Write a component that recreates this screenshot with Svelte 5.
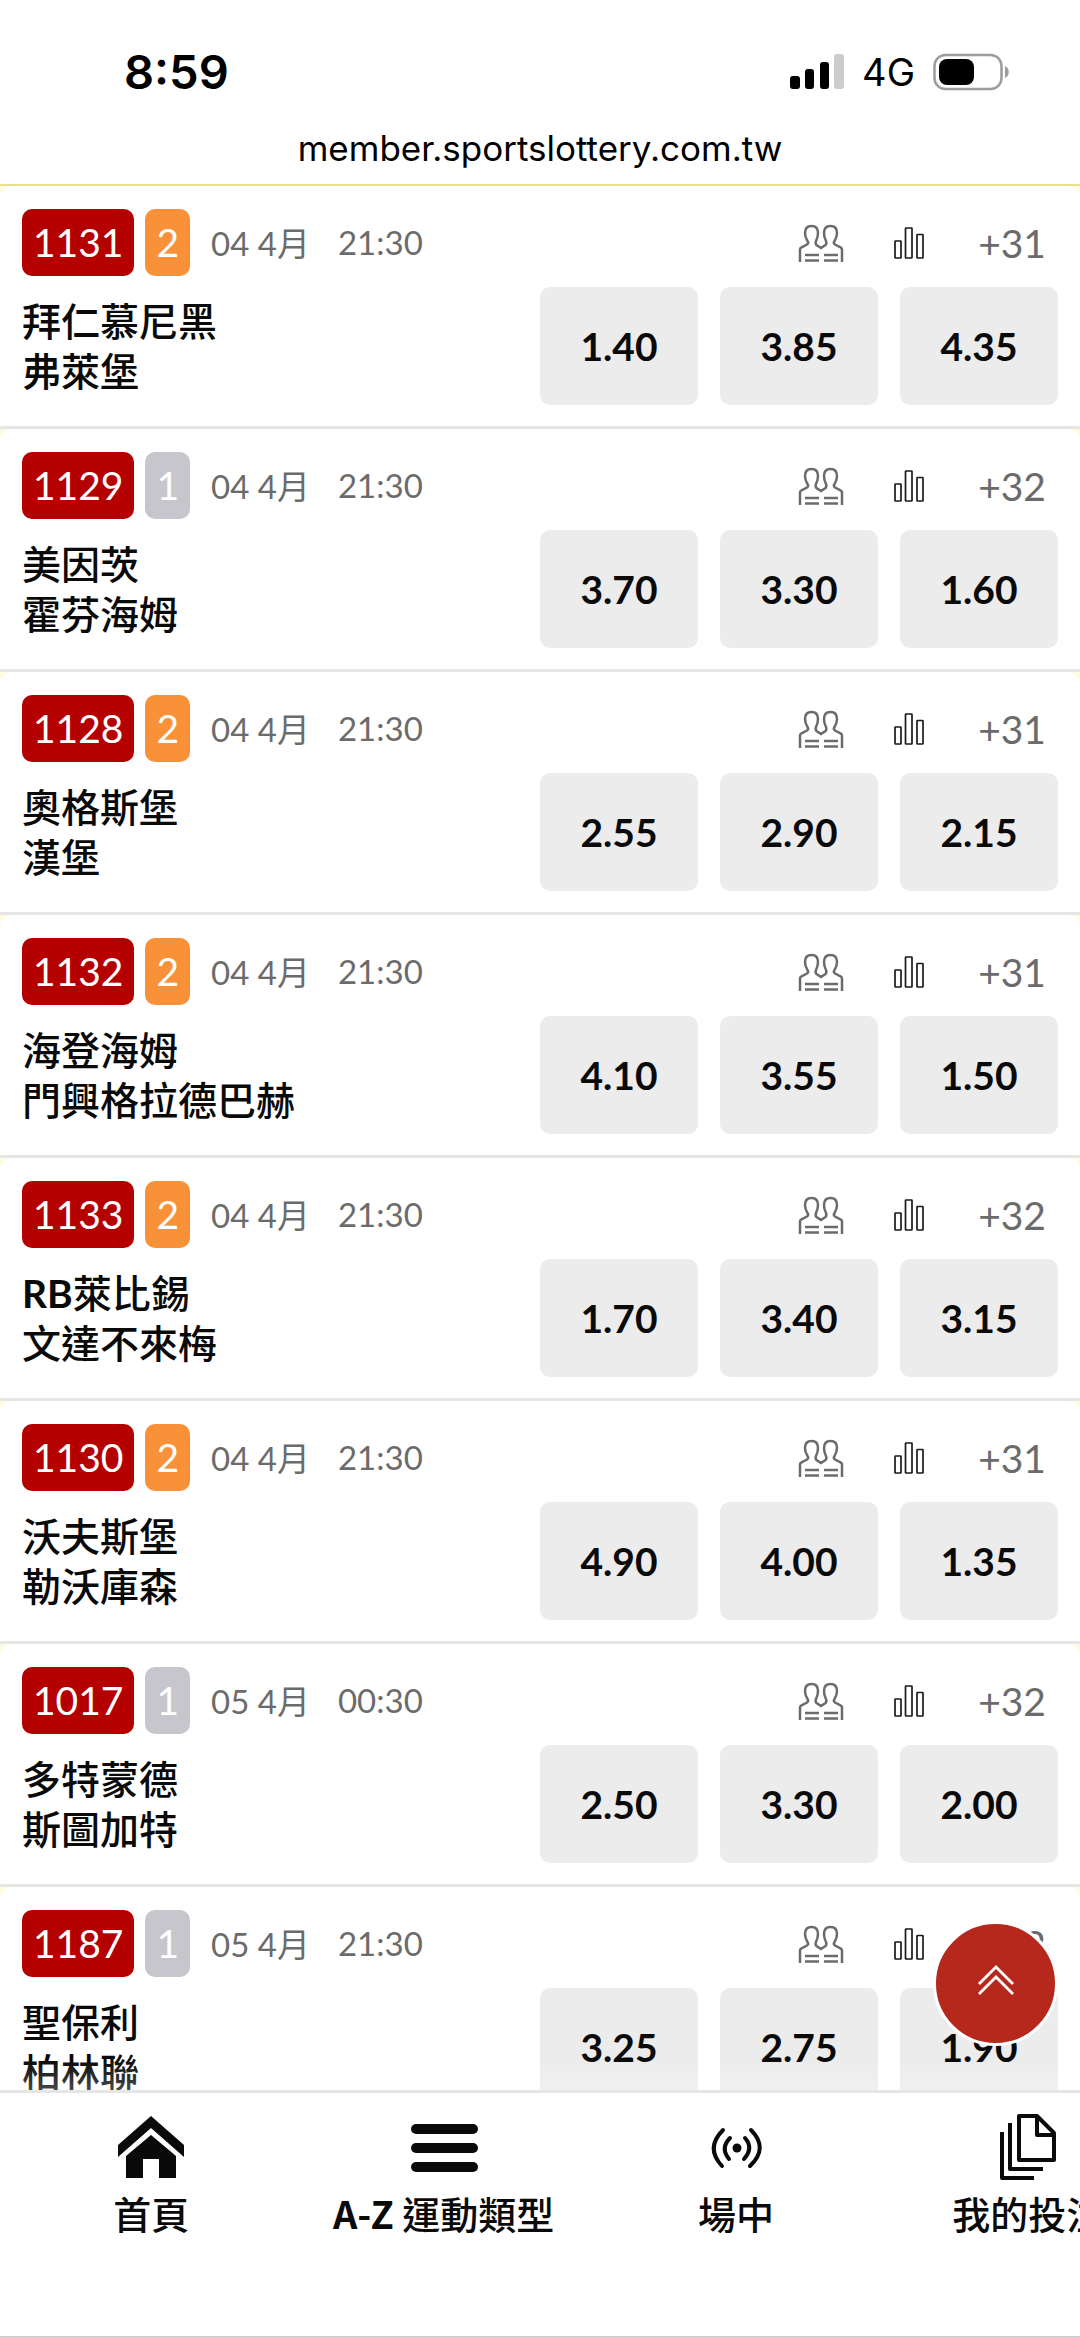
<script lang="ts">
  type Match = {
    id: string
    legs: number
    date: string
    time: string
    more: string
    teams: { prefix?: string; name: string }[]
    odds: string[]
  }

  const matches: Match[] = [
    { id: "1131", legs: 2, date: "04 4月", time: "21:30", more: "+31", teams: [{ name: "拜仁慕尼黑" }, { name: "弗萊堡" }], odds: ["1.40", "3.85", "4.35"] },
    { id: "1129", legs: 1, date: "04 4月", time: "21:30", more: "+32", teams: [{ name: "美因茨" }, { name: "霍芬海姆" }], odds: ["3.70", "3.30", "1.60"] },
    { id: "1128", legs: 2, date: "04 4月", time: "21:30", more: "+31", teams: [{ name: "奧格斯堡" }, { name: "漢堡" }], odds: ["2.55", "2.90", "2.15"] },
    { id: "1132", legs: 2, date: "04 4月", time: "21:30", more: "+31", teams: [{ name: "海登海姆" }, { name: "門興格拉德巴赫" }], odds: ["4.10", "3.55", "1.50"] },
    { id: "1133", legs: 2, date: "04 4月", time: "21:30", more: "+32", teams: [{ prefix: "RB", name: "萊比錫" }, { name: "文達不來梅" }], odds: ["1.70", "3.40", "3.15"] },
    { id: "1130", legs: 2, date: "04 4月", time: "21:30", more: "+31", teams: [{ name: "沃夫斯堡" }, { name: "勒沃庫森" }], odds: ["4.90", "4.00", "1.35"] },
    { id: "1017", legs: 1, date: "05 4月", time: "00:30", more: "+32", teams: [{ name: "多特蒙德" }, { name: "斯圖加特" }], odds: ["2.50", "3.30", "2.00"] },
    { id: "1187", legs: 1, date: "05 4月", time: "21:30", more: "+32", teams: [{ name: "聖保利" }, { name: "柏林聯" }], odds: ["3.25", "2.75", "1.90"] },
  ]
</script>

<div class="app">
  <header>
    <div class="status">
      <span class="clock">8:59</span>
      <div class="signals">
        <svg width="54" height="36" viewBox="0 0 54 36" aria-hidden="true">
          <rect x="0" y="22" width="10" height="13" rx="3" />
          <rect x="15" y="15" width="9" height="20" rx="3" />
          <rect x="30" y="8" width="9" height="27" rx="3" />
          <rect x="44" y="0" width="10" height="35" rx="3" fill="#ccc" />
        </svg>
        <span class="network">4G</span>
        <svg width="76" height="38" viewBox="0 0 76 38" aria-hidden="true">
          <rect x="1.500" y="2" width="67" height="34" rx="11" fill="none" stroke="#9d9d9d" stroke-width="2.500" />
          <rect x="6" y="6" width="35" height="26" rx="8" />
          <path d="M72 13c5 2 5 10 0 12z" fill="#9d9d9d" />
        </svg>
      </div>
    </div>
    <div class="url">member.sportslottery.com.tw</div>
  </header>

  <main>
    {#each matches as match (match.id)}
      <article class="match">
        <div class="info">
          <span class="badge">{match.id}</span>
          <span class="badge" class:single={match.legs === 1} class:double={match.legs === 2}>{match.legs}</span>
          <span class="date">{match.date}</span>
          <span class="time">{match.time}</span>
          <div class="links">
            <button class="people" aria-label="對戰紀錄">
              <svg width="46" height="38" viewBox="0 0 46 38" fill="none" stroke="#6b6b6b" stroke-width="2.500">
                <path d="M2 38V25.500Q2 24 3.500 23.300L9 20.500Q11 19 9.500 17Q7 13 7 9Q7 2 13.500 2Q20 2 20 9Q20 13 18 17Q17 19.500 18.500 21L23 24L27.500 21Q29 19.500 28 17Q26 13 26 9Q26 2 32.500 2Q39 2 39 9Q39 13 36.500 17Q35 19 37 20.500L42.500 23.300Q44 24 44 25.500V38" />
                <path d="M7 31h14M26 31h14M7 36.500h14M26 36.500h14" />
              </svg>
            </button>
            <button class="stats" aria-label="統計">
              <svg width="30" height="32" viewBox="0 0 30 32" fill="none" stroke="#1a1a1a" stroke-width="1.700">
                <rect x="1" y="14" width="6" height="17" rx="0.500" />
                <rect x="11.500" y="1" width="6.500" height="30" rx="0.500" />
                <rect x="23" y="7.500" width="6" height="23.500" rx="0.500" />
              </svg>
            </button>
            <a class="more" href="#{match.id}">{match.more}</a>
          </div>
        </div>
        <div class="body">
          <div class="teams">
            {#each match.teams as team}
              <div>{#if team.prefix}<b>{team.prefix}</b>{/if}{team.name}</div>
            {/each}
          </div>
          <div class="odds">
            {#each match.odds as odd}
              <button>{odd}</button>
            {/each}
          </div>
        </div>
      </article>
    {/each}
  </main>

  <button class="to-top" aria-label="回到頂部">
    <svg width="36" height="30" viewBox="0 0 36 30" fill="none" stroke="#fff" stroke-width="2.800">
      <path d="M1 19L18 2l17 17M1 29L18 12l17 17" />
    </svg>
  </button>

  <nav>
    <a href="#home">
      <svg width="68" height="68" viewBox="0 0 68 68" fill="#0a0a0a">
        <path d="M34 3L67 32V44L34 15L1 44V32Z" />
        <path d="M34 22L59 43V65H42V46H26V65H9V43Z" />
      </svg>
      <span>首頁</span>
    </a>
    <a href="#sports">
      <svg width="68" height="68" viewBox="0 0 68 68" fill="#0a0a0a">
        <rect x="1" y="11" width="67" height="10" rx="5" />
        <rect x="1" y="30" width="67" height="10" rx="5" />
        <rect x="1" y="49" width="67" height="10" rx="5" />
      </svg>
      <span><b>A-Z</b> 運動類型</span>
    </a>
    <a href="#live">
      <svg width="68" height="68" viewBox="0 0 68 68" fill="none" stroke="#0a0a0a" stroke-width="4" stroke-linecap="round">
        <circle cx="35" cy="35" r="4.500" fill="#0a0a0a" stroke="none" />
        <path d="M28 25Q18 35 27 46M43 25Q52 35 42 46M21 17Q3 35 20 53M49 17Q67 35 48 53" />
      </svg>
      <span>場中</span>
    </a>
    <a href="#bets">
      <svg width="68" height="68" viewBox="0 0 68 68" fill="none" stroke="#0a0a0a" stroke-width="4" stroke-linejoin="round">
        <path d="M25 3H43L60 20V47H25ZM43 3V22H60" />
        <path d="M16 10V56H49M8 19V65H40" />
      </svg>
      <span>我的投注</span>
    </a>
  </nav>
</div>

<style>
  :global(body) {
    margin: 0;
    background: #fff;
  }

  .app {
    display: flex;
    flex-direction: column;
    height: 100vh;
    overflow: hidden;
    box-sizing: border-box;
    border-bottom: 1px solid #ccc;
    font-family: Lato, "Noto Sans CJK TC", sans-serif;
    color: #0a0a0a;
  }

  button {
    margin: 0;
    padding: 0;
    border: 0;
    background: none;
    font: inherit;
    color: inherit;
  }

  a {
    color: inherit;
    text-decoration: none;
  }

  b {
    font-weight: 700;
  }

  svg {
    display: block;
  }

  header {
    flex: none;
    font-family: Inter, sans-serif;
    color: #000;
    border-bottom: 2px solid #ece08c;
  }

  .status {
    display: flex;
    align-items: center;
    justify-content: space-between;
    padding: 42px 71px 0 124px;
  }

  .clock {
    font-size: 47px;
    font-weight: 600;
    line-height: 60px;
  }

  .signals {
    display: flex;
    align-items: center;
    gap: 18px;
  }

  .network {
    font-size: 38px;
    line-height: 60px;
  }

  .url {
    padding: 18px 0 8px;
    font-size: 35px;
    line-height: 56px;
    text-align: center;
  }

  main {
    position: relative;
    flex: 1;
    min-height: 0;
    overflow: hidden;
    background: #fffbe0;
  }

  /* the list fades out just above the tab bar */
  main::after {
    content: "";
    position: absolute;
    inset: auto 0 0;
    height: 30px;
    background: linear-gradient(rgb(255 255 255 / 0), rgb(255 255 255 / 0.25));
  }

  .match {
    padding: 23px 22px 21px;
    border-bottom: 3px solid #e6e6e6;
    border-radius: 12px 12px 0 0;
    background: #fff;
  }

  .info {
    display: flex;
    align-items: center;
    height: 67px;
    margin-bottom: 11px;
    color: #6b6b6b;
  }

  .badge {
    padding: 0 11px;
    margin-right: 11px;
    border-radius: 10px;
    background: #b50000;
    color: #fff;
    font-size: 39px;
    line-height: 67px;
  }

  .single {
    background: #c7c6cd;
  }

  .double {
    background: #f99138;
  }

  .date,
  .time {
    padding-bottom: 2px;
    font-size: 33px;
  }

  .date {
    margin-left: 10px;
  }

  .time {
    margin-left: 28px;
  }

  .links {
    display: flex;
    align-items: center;
    margin-left: auto;
    padding-right: 12px;
  }

  .people {
    margin-right: 50px;
  }

  .stats {
    margin-right: 54px;
  }

  .more {
    font-size: 39px;
  }

  .body {
    display: flex;
    align-items: center;
  }

  .teams {
    flex: 1;
    font-size: 39px;
    font-weight: 500;
    line-height: 50px;
  }

  .odds {
    display: flex;
    flex: 1;
    gap: 22px;
  }

  .odds button {
    flex: 1;
    height: 118px;
    border-radius: 10px;
    background: #ececec;
    font-size: 39px;
    font-weight: 700;
  }

  .to-top {
    position: fixed;
    right: 22px;
    bottom: 291px;
    display: flex;
    align-items: center;
    justify-content: center;
    box-sizing: border-box;
    width: 125px;
    height: 125px;
    padding-bottom: 8px;
    border: 3px solid #fff;
    border-radius: 50%;
    background: #b5281b;
  }

  nav {
    display: flex;
    flex: none;
    height: 243px;
    padding-left: 5px;
    overflow: hidden;
    border-top: 3px solid #e6e6e6;
    background: #fff;
  }

  nav a {
    display: flex;
    flex: 0 0 27.2%;
    flex-direction: column;
    align-items: center;
    gap: 4px;
    padding-top: 20px;
    font-family: "Noto Sans CJK TC", sans-serif;
    font-size: 38px;
    font-weight: 500;
    line-height: 56px;
    white-space: nowrap;
  }
</style>
